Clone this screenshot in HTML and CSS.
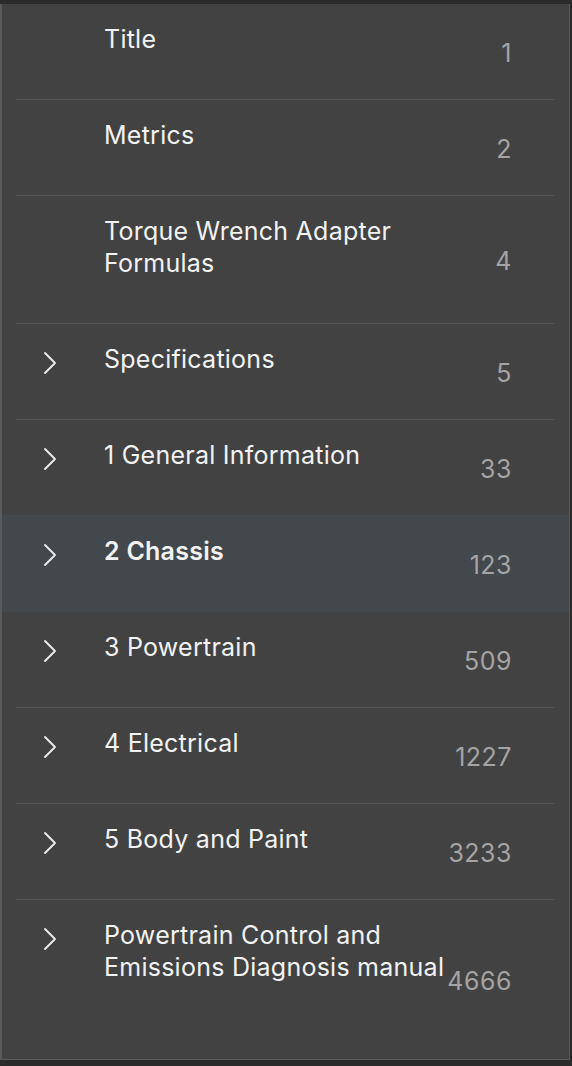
FILE: index.html
```html
<!DOCTYPE html>
<html lang="en">
<head>
  <meta charset="UTF-8">
  <meta name="viewport" content="width=device-width, initial-scale=1">
  <title>Contents</title>
  <link rel="stylesheet" href="styles.css">
</head>
<body>
  <div class="panel">

    <div class="item">
      <div class="row">
        <div class="chev"></div>
        <div class="label">Title</div>
        <div class="page">1</div>
      </div>
    </div>

    <div class="item">
      <div class="row">
        <div class="chev"></div>
        <div class="label">Metrics</div>
        <div class="page">2</div>
      </div>
    </div>

    <div class="item">
      <div class="row">
        <div class="chev"></div>
        <div class="label">Torque Wrench Adapter Formulas</div>
        <div class="page">4</div>
      </div>
    </div>

    <div class="item">
      <div class="row">
        <div class="chev"><svg width="14" height="24" viewBox="0 0 14 24"><path d="M2 2 L12 12 L2 22"/></svg></div>
        <div class="label">Specifications</div>
        <div class="page">5</div>
      </div>
    </div>

    <div class="item">
      <div class="row">
        <div class="chev"><svg width="14" height="24" viewBox="0 0 14 24"><path d="M2 2 L12 12 L2 22"/></svg></div>
        <div class="label">1 General Information</div>
        <div class="page">33</div>
      </div>
    </div>

    <div class="item selected">
      <div class="row">
        <div class="chev"><svg width="14" height="24" viewBox="0 0 14 24"><path d="M2 2 L12 12 L2 22"/></svg></div>
        <div class="label">2 Chassis</div>
        <div class="page">123</div>
      </div>
    </div>

    <div class="item">
      <div class="row">
        <div class="chev"><svg width="14" height="24" viewBox="0 0 14 24"><path d="M2 2 L12 12 L2 22"/></svg></div>
        <div class="label">3 Powertrain</div>
        <div class="page">509</div>
      </div>
    </div>

    <div class="item">
      <div class="row">
        <div class="chev"><svg width="14" height="24" viewBox="0 0 14 24"><path d="M2 2 L12 12 L2 22"/></svg></div>
        <div class="label">4 Electrical</div>
        <div class="page">1227</div>
      </div>
    </div>

    <div class="item">
      <div class="row">
        <div class="chev"><svg width="14" height="24" viewBox="0 0 14 24"><path d="M2 2 L12 12 L2 22"/></svg></div>
        <div class="label">5 Body and Paint</div>
        <div class="page">3233</div>
      </div>
    </div>

    <div class="item last">
      <div class="row">
        <div class="chev"><svg width="14" height="24" viewBox="0 0 14 24"><path d="M2 2 L12 12 L2 22"/></svg></div>
        <div class="label">Powertrain Control and Emissions Diagnosis manual</div>
        <div class="page">4666</div>
      </div>
    </div>

  </div>
</body>
</html>
```

FILE: styles.css
```css
body {
  margin: 0;
  padding: 4px 2px 0 0;
  background: #2b2b2b;
  font-family: Inter, 'Noto Sans', sans-serif;
}

.panel {
  height: 1056px;
  box-sizing: border-box;
  background: #424242;
  border-left: 2px solid #5a5a5a;
  border-right: 1px solid #555;
  border-bottom: 1px solid #5a5a5a;
  display: flex;
  flex-direction: column;
}

.item {
  background: #424242;
}

.item.selected {
  background: #43484c;
  margin-top: -1px;
  padding-top: 1px;
}

.item.selected .row {
  border-bottom-color: transparent;
}

.item.last {
  flex: 1;
  display: flex;
}

.item.last .row {
  flex: 1;
  border-bottom: none;
}

.row {
  display: flex;
  margin: 0 15px 0 14px;
  border-bottom: 1px solid #555;
}

.chev {
  width: 88px;
  flex-shrink: 0;
}

.chev svg {
  display: block;
  margin: 27px 0 0 27px;
}

.chev path {
  fill: none;
  stroke: #e8e8e8;
  stroke-width: 2;
  stroke-linecap: round;
  stroke-linejoin: round;
}

.label {
  flex: 1;
  padding: 19px 0 44px 0;
  font-size: 25px;
  letter-spacing: 0.25px;
  line-height: 32px;
  color: #f2f2f2;
}

.selected .label {
  font-weight: 600;
}

.page {
  align-self: center;
  margin-top: 3px;
  padding-right: 42px;
  font-size: 25px;
  letter-spacing: 0.5px;
  line-height: 32px;
  color: #a4a4a4;
  text-align: right;
}
```
